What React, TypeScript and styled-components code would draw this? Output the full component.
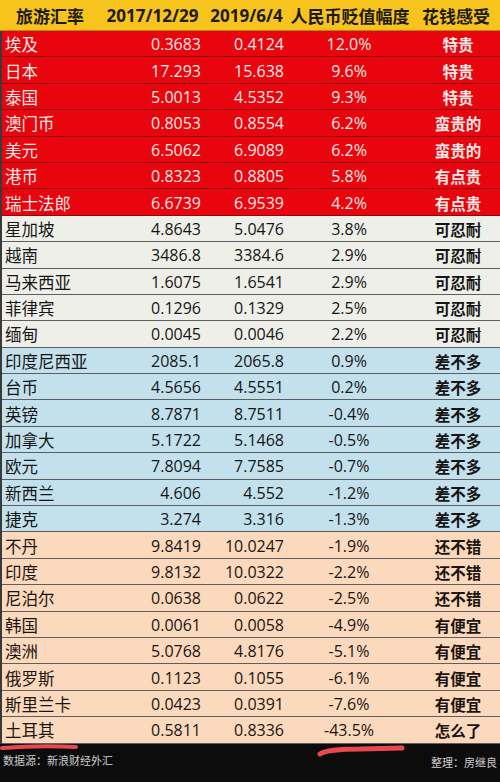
import React from 'react';
import styled, { createGlobalStyle } from 'styled-components';

type Tone = 'red' | 'gray' | 'blue' | 'peach';

interface Rate {
  name: string;
  before: string;
  after: string;
  change: string;
  feel: string;
  tone: Tone;
}

const rates: Rate[] = [
  { name: '埃及', before: '0.3683', after: '0.4124', change: '12.0%', feel: '特贵', tone: 'red' },
  { name: '日本', before: '17.293', after: '15.638', change: '9.6%', feel: '特贵', tone: 'red' },
  { name: '泰国', before: '5.0013', after: '4.5352', change: '9.3%', feel: '特贵', tone: 'red' },
  { name: '澳门币', before: '0.8053', after: '0.8554', change: '6.2%', feel: '蛮贵的', tone: 'red' },
  { name: '美元', before: '6.5062', after: '6.9089', change: '6.2%', feel: '蛮贵的', tone: 'red' },
  { name: '港币', before: '0.8323', after: '0.8805', change: '5.8%', feel: '有点贵', tone: 'red' },
  { name: '瑞士法郎', before: '6.6739', after: '6.9539', change: '4.2%', feel: '有点贵', tone: 'red' },
  { name: '星加坡', before: '4.8643', after: '5.0476', change: '3.8%', feel: '可忍耐', tone: 'gray' },
  { name: '越南', before: '3486.8', after: '3384.6', change: '2.9%', feel: '可忍耐', tone: 'gray' },
  { name: '马来西亚', before: '1.6075', after: '1.6541', change: '2.9%', feel: '可忍耐', tone: 'gray' },
  { name: '菲律宾', before: '0.1296', after: '0.1329', change: '2.5%', feel: '可忍耐', tone: 'gray' },
  { name: '缅甸', before: '0.0045', after: '0.0046', change: '2.2%', feel: '可忍耐', tone: 'gray' },
  { name: '印度尼西亚', before: '2085.1', after: '2065.8', change: '0.9%', feel: '差不多', tone: 'blue' },
  { name: '台币', before: '4.5656', after: '4.5551', change: '0.2%', feel: '差不多', tone: 'blue' },
  { name: '英镑', before: '8.7871', after: '8.7511', change: '-0.4%', feel: '差不多', tone: 'blue' },
  { name: '加拿大', before: '5.1722', after: '5.1468', change: '-0.5%', feel: '差不多', tone: 'blue' },
  { name: '欧元', before: '7.8094', after: '7.7585', change: '-0.7%', feel: '差不多', tone: 'blue' },
  { name: '新西兰', before: '4.606', after: '4.552', change: '-1.2%', feel: '差不多', tone: 'blue' },
  { name: '捷克', before: '3.274', after: '3.316', change: '-1.3%', feel: '差不多', tone: 'blue' },
  { name: '不丹', before: '9.8419', after: '10.0247', change: '-1.9%', feel: '还不错', tone: 'peach' },
  { name: '印度', before: '9.8132', after: '10.0322', change: '-2.2%', feel: '还不错', tone: 'peach' },
  { name: '尼泊尔', before: '0.0638', after: '0.0622', change: '-2.5%', feel: '还不错', tone: 'peach' },
  { name: '韩国', before: '0.0061', after: '0.0058', change: '-4.9%', feel: '有便宜', tone: 'peach' },
  { name: '澳洲', before: '5.0768', after: '4.8176', change: '-5.1%', feel: '有便宜', tone: 'peach' },
  { name: '俄罗斯', before: '0.1123', after: '0.1055', change: '-6.1%', feel: '有便宜', tone: 'peach' },
  { name: '斯里兰卡', before: '0.0423', after: '0.0391', change: '-7.6%', feel: '有便宜', tone: 'peach' },
  { name: '土耳其', before: '0.5811', after: '0.8336', change: '-43.5%', feel: '怎么了', tone: 'peach' },
];

const toneBg: Record<Tone, string> = {
  red: '#e8050d',
  gray: '#efefe9',
  blue: '#c3e1ec',
  peach: '#fbd9bd',
};

const toneInk: Record<Tone, string> = {
  red: '#fbe9e6',
  gray: '#151515',
  blue: '#151515',
  peach: '#1c1410',
};

const GlobalStyle = createGlobalStyle`
  html, body {
    margin: 0;
    padding: 0;
    background: #0b0b0b;
  }
  body {
    font-family: "Open Sans", "Noto Sans CJK SC", sans-serif;
  }
`;

const Page = styled.div`
  width: 500px;
  height: 782px;
  display: flex;
  flex-direction: column;
  overflow: hidden;
`;

const Header = styled.div`
  display: grid;
  grid-template-columns: 100px 105px 83px 124px 88px;
  height: 31px;
  align-items: center;
  background: #f6c41c;
  color: #1e1a10;
  font-family: "Open Sans", "Noto Sans CJK SC", sans-serif;
  font-weight: 700;
  font-size: 17px;
  text-align: center;
  border-bottom: 1px solid #b0871a;
  box-sizing: border-box;
`;

const Body = styled.div`
  display: flex;
  flex-direction: column;
  border-left: 2px solid #3a3a3a;
`;

const Row = styled.div<{ $tone: Tone }>`
  display: grid;
  grid-template-columns: 98px 105px 83px 124px 88px;
  height: 26.4px;
  align-items: center;
  background: ${p => toneBg[p.$tone]};
  color: ${p => toneInk[p.$tone]};
  border-bottom: 1px solid ${p => (p.$tone === 'red' ? '#8a0b0b' : '#5e5e5e')};
  box-sizing: border-box;
  font-size: 16px;
  padding-top: 1px;
`;

const Name = styled.div`
  padding-left: 3px;
  font-size: 16.5px;
  font-family: "Noto Sans CJK SC", sans-serif;
  white-space: nowrap;
`;

const Num = styled.div`
  text-align: right;
  padding-right: 4px;
`;

const Change = styled.div`
  text-align: center;
  padding-right: 2px;
`;

const Feel = styled.div`
  text-align: center;
  font-weight: 700;
  font-family: "Noto Sans CJK SC", sans-serif;
  font-size: 15.5px;
  padding-left: 4px;
`;

const Footer = styled.div`
  position: relative;
  flex: 1;
  display: flex;
  justify-content: space-between;
  align-items: flex-start;
  padding: 8px 3px 0 3px;
  background: #0c0c0c;
  color: #cfcfcf;
  font-family: "Noto Sans CJK SC", sans-serif;
  font-size: 11px;
`;

const Credit = styled.span`
  margin-top: 2px;
`;

const Marks = styled.svg`
  position: absolute;
  left: 0;
  top: 0;
  pointer-events: none;
`;

export default function App() {
  return (
    <Page>
      <GlobalStyle />
      <Header>
        <div>旅游汇率</div>
        <div>2017/12/29</div>
        <div>2019/6/4</div>
        <div>人民币贬值幅度</div>
        <div>花钱感受</div>
      </Header>
      <Body>
        {rates.map(r => (
          <Row key={r.name} $tone={r.tone}>
            <Name>{r.name}</Name>
            <Num>{r.before}</Num>
            <Num>{r.after}</Num>
            <Change>{r.change}</Change>
            <Feel>{r.feel}</Feel>
          </Row>
        ))}
      </Body>
      <Footer>
        <span>数据源：新浪财经外汇</span>
        <Credit>整理：房继良</Credit>
        <Marks width="500" height="20" viewBox="0 0 500 20">
          <path d="M2 4 Q40 1 76 3" stroke="#e8484f" strokeWidth="4" fill="none" strokeLinecap="round" />
          <path d="M320 10 Q328 5 360 5 L402 4" stroke="#e8484f" strokeWidth="5" fill="none" strokeLinecap="round" />
        </Marks>
      </Footer>
    </Page>
  );
}
